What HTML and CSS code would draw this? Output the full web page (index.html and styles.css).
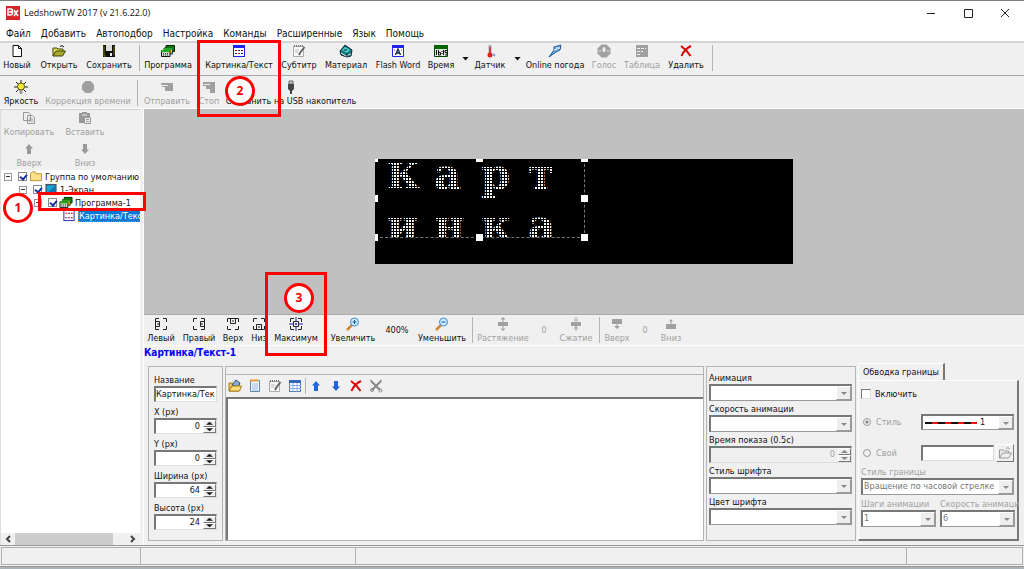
FILE: index.html
```html
<!DOCTYPE html>
<html lang="ru">
<head>
<meta charset="utf-8">
<title>LedshowTW 2017</title>
<link rel="stylesheet" href="styles.css">
</head>
<body>
<svg class="defs" aria-hidden="true">
  <symbol id="i-text" viewBox="0 0 14 14"><rect x="1.5" y="1.5" width="11" height="11" fill="#fff" stroke="#22e"/><path d="M1 1h12v3H1z" fill="#22e"/><path d="M3 6h2v1H3zM9 6h2v1H9zM6 9h2v1H6z" fill="#c00"/><path d="M6 6h2v1H6zM3 9h2v1H3zM9 9h2v1H9z" fill="#226"/></symbol>
  <symbol id="i-dots" viewBox="0 0 14 14"><rect x="1.5" y="1.5" width="11" height="11" fill="#fff" stroke="#22a"/><path d="M3 4h2v1H3zM9 4h2v1H9zM6 9h2v1H6z" fill="#c00"/><path d="M6 4h2v1H6zM3 9h2v1H3zM9 9h2v1H9z" fill="#226"/></symbol>
  <symbol id="i-prog" viewBox="0 0 14 14"><path d="M5 1.500h8.500v6H5z" fill="#080" stroke="#020"/><path d="M3 4h8.500v6H3z" fill="#fb0" stroke="#141"/><path d="M3 4h8.500v2H3z" fill="#2a2"/><path d="M.5 6.500h8.500v6H.5z" fill="#cdc" stroke="#111"/><path d="M0 7h9" stroke="#2a2" stroke-width="2"/><path d="M2 9.500h6M2 11h6" stroke="#333" stroke-dasharray="1 1"/></symbol>
  <symbol id="i-up" viewBox="0 0 14 14"><path d="M7 2l4 4.500H9V12H5V6.500H3z"/></symbol>
  <symbol id="i-down" viewBox="0 0 14 14"><path d="M7 12l4-4.500H9V2H5v5.500H3z"/></symbol>
  <symbol id="i-x" viewBox="0 0 14 14"><path d="M2 2c3 2 7 6 9.500 10M12 2C8 4 4 8 2.500 12" fill="none" stroke="#d00" stroke-width="2"/></symbol>
  <symbol id="i-open" viewBox="0 0 14 14"><path d="M1 12V4h4l1 1h5v2" fill="#dd5" stroke="#440"/><path d="M1 12l3-5h9.500l-3 5z" fill="#aa3" stroke="#440"/><path d="M8 2.500q2-2 4 .5" fill="none" stroke="#111"/></symbol>
  <symbol id="i-note" viewBox="0 0 14 14"><path d="M1.500 2.500h10v10h-10z" fill="#f8f8f8" stroke="#aaa"/><path d="M2 2h10" stroke="#777" stroke-width="2" stroke-dasharray="1 1"/><path d="M3 6h4M3 8h3" stroke="#bbb"/><path d="M12.500 3L8 9l-1 2" fill="none" stroke="#666" stroke-width="2"/></symbol>
</svg>

<div class="window">
  <header class="titlebar">
    <svg class="logo" viewBox="0 0 14 14"><rect width="14" height="14" fill="#d8232a"/><path d="M2 3h3q2 0 1 2 2 2-1 4H2zM3 6h3M8 4l4 6M12 4l-4 6" fill="none" stroke="#fff" stroke-width="1.500"/></svg>
    <h1>LedshowTW 2017 (v 21.6.22.0)</h1>
    <div class="caption">
      <button aria-label="Свернуть"><svg viewBox="0 0 10 10"><path d="M1 5.500h8" /></svg></button>
      <button aria-label="Развернуть"><svg viewBox="0 0 10 10"><path d="M1.500 1.500h8v8h-8z" /></svg></button>
      <button aria-label="Закрыть"><svg viewBox="0 0 10 10"><path d="M1 1l8 8M9 1L1 9" /></svg></button>
    </div>
  </header>
  <nav class="menu">
    <a href="#">Файл</a><a href="#">Добавить</a><a href="#">Автоподбор</a><a href="#">Настройка</a><a href="#">Команды</a><a href="#">Расширенные</a><a href="#">Язык</a><a href="#">Помощь</a>
  </nav>

  <div class="toolbar main-tools">
    <button class="tool w28"><svg viewBox="0 0 14 14"><path d="M3 1.500h5.500l3 3v8H3z" fill="#fff" stroke="#111"/><path d="M8.500 1.500v3h3" fill="none" stroke="#111"/></svg>Новый</button>
    <button class="tool w38"><svg><use href="#i-open"/></svg>Открыть</button>
    <button class="tool w44"><svg viewBox="0 0 14 14"><path d="M1 1h12v12H1z" fill="#111"/><path d="M4 1h6v6H4z" fill="#ddd"/><path d="M2 2v10h2M12 2v9" fill="none" stroke="#770"/><path d="M8 9h2v3H8z" fill="#eee"/></svg>Сохранить</button>
    <span class="sep"></span>
    <button class="tool w44"><svg><use href="#i-prog"/></svg>Программа</button>
    <button class="tool w68 lead"><svg><use href="#i-text"/></svg>Картинка/Текст</button>
    <button class="tool w34"><svg><use href="#i-note"/></svg>Субтитр</button>
    <button class="tool w42"><svg viewBox="0 0 14 14"><path d="M1 7l5-6 7 5-1 6-4 1-6-2z" fill="#157b80" stroke="#123"/><path d="M3 6l3-3 5 3-3 3z" fill="#4cc"/><path d="M2 9l5 3 5-2" stroke="#ddd" fill="none"/><path d="M5 6h3M8 9v3" stroke="#123"/></svg>Материал</button>
    <button class="tool w44"><svg viewBox="0 0 14 14"><path d="M1.500 2h11v10.500h-11z" fill="#fff" stroke="#22e"/><path d="M1 1h12v3H1z" fill="#22e"/><path d="M4.500 11l2.500-6 2.500 6M5 9h4" fill="none" stroke="#125" stroke-width="1.300"/><path d="M3 6h1M10 6h1" stroke="#c0c"/></svg>Flash Word</button>
    <button class="tool w24"><svg viewBox="0 0 14 14"><path d="M.5 1.500h13v11H.5z" fill="#dfe8df" stroke="#040"/><path d="M0 1h14v4H0z" fill="#060"/><path d="M2.500 6v5M4.500 6v5h2V8.500h-2M8 7v1M8 9v1M9.500 6v5M13 6.500h-2v2h2V11h-2" fill="none" stroke="#111"/></svg>Время</button>
    <button class="drop" aria-label="Меню времени"></button>
    <button class="tool w30"><svg viewBox="0 0 14 14"><path d="M7 1v9" stroke="#aab" stroke-width="3"/><path d="M7 3v8" stroke="#d22" stroke-width="1.500"/><circle cx="7" cy="11" r="2.500" fill="#d22"/><path d="M10 10l2 2" stroke="#6ad" stroke-width="2"/></svg>Датчик</button>
    <button class="drop" aria-label="Меню датчика"></button>
    <button class="tool w56"><svg viewBox="0 0 14 14"><path d="M1 13l5-7V3l7-2-1 5-4 2z" fill="#6ad" stroke="#259"/><path d="M6 6l3-1M8 4h4" stroke="#fff"/></svg>Online погода</button>
    <button class="tool w24" disabled><svg viewBox="0 0 14 14"><path d="M4.500.5h5l4 4v5l-4 4h-5l-4-4v-5z" fill="#a0a0a0"/><rect x="5.500" y="3" width="3" height="5" rx="1.500" fill="#eee"/><path d="M2 7h2M10 7h2" stroke="#eee"/></svg>Голос</button>
    <button class="tool w34" disabled><svg viewBox="0 0 14 14"><path d="M1 1h12v12H1z" fill="#a0a0a0"/><path d="M2 4.500h9M2 7.500h6M2 10.500h3" stroke="#eee" stroke-dasharray="3 1"/></svg>Таблица</button>
    <button class="tool w36"><svg><use href="#i-x"/></svg>Удалить</button>
    <span class="sep"></span>
  </div>

  <div class="toolbar send-tools">
    <button class="tool w34"><svg viewBox="0 0 14 14"><path d="M7 0v14M0 7h14M2 2l10 10M12 2L2 12" stroke="#222"/><circle cx="7" cy="6.500" r="3.500" fill="#fe3" stroke="#550"/><path d="M5.500 10h3v3h-3z" fill="#999"/></svg>Яркость</button>
    <button class="tool w82" disabled><svg viewBox="0 0 14 14"><path d="M4.500 1h5L13 4.500v5L9.500 13h-5L1 9.500v-5z" fill="#a0a0a0"/></svg>Коррекция времени</button>
    <span class="sep"></span>
    <button class="tool w46" disabled><svg viewBox="0 0 14 14"><path d="M1 3h12v8H5V7H2z" fill="#a0a0a0"/><path d="M1 5.500h7" stroke="#eee"/></svg>Отправить</button>
    <button class="tool w20" disabled><svg viewBox="0 0 14 14"><path d="M1 2h12v11H8V9H4V6H1z" fill="#a0a0a0"/><path d="M2 4.500h6" stroke="#eee"/></svg>Стоп</button>
    <button class="tool w126"><svg viewBox="0 0 14 14"><path d="M5 1h4v3H5z" fill="#ccc" stroke="#666"/><path d="M4 4h6v5l-2 2v3H6v-3L4 9z" fill="#444"/></svg>Сохранить на USB накопитель</button>
  </div>

  <div class="workspace">
    <aside class="sidebar">
      <div class="side-tools">
        <button class="tool" disabled><svg viewBox="0 0 14 14"><path d="M1.500 1.500h5l2 2v6h-7zM5.500 4.500h5l2 2v6h-7z" fill="#eee" stroke="#999"/><path d="M7 8h4M7 10h4" stroke="#999"/></svg>Копировать</button>
        <button class="tool" disabled><svg viewBox="0 0 14 14"><path d="M1 2h3V1h5v1h3v10H1z" fill="#999"/><path d="M4 4h5" stroke="#eee"/><path d="M6.500 6.500h6v6h-6z" fill="#eee" stroke="#999"/><path d="M8 8.500h3M8 10.500h3" stroke="#999"/></svg>Вставить</button>
        <button class="tool" disabled><svg fill="#999"><use href="#i-up"/></svg>Вверх</button>
        <button class="tool" disabled><svg fill="#999"><use href="#i-down"/></svg>Вниз</button>
      </div>
      <ul class="tree">
        <li><span class="exp"></span><input type="checkbox" checked id="n1"><svg viewBox="0 0 14 14"><path d="M1 11.500V4l2-2h3l1 2h6v7.500z" fill="#fbe08a" stroke="#b89030"/></svg><label for="n1">Группа по умолчанию1</label></li>
        <li class="l1"><span class="exp"></span><input type="checkbox" checked id="n2"><svg viewBox="0 0 14 14"><path d="M1 1h12v12H1z" fill="#456"/><path d="M2.500 2.500h9v9h-9z" fill="#18a8d8"/><path d="M3 11l8-8v8z" fill="#0878b8"/></svg><label for="n2">1-Экран</label></li>
        <li class="l2"><span class="exp"></span><input type="checkbox" checked id="n3"><svg><use href="#i-prog"/></svg><label for="n3">Программа-1</label></li>
        <li class="l3"><svg><use href="#i-dots"/></svg><a href="#" class="selected">Картинка/Текст-1</a></li>
      </ul>
      <div class="hscroll"><button aria-label="Влево"><svg viewBox="0 0 8 8"><path d="M6 1L3 4l3 3"/></svg></button><span class="thumb"></span><button aria-label="Вправо"><svg viewBox="0 0 8 8"><path d="M2 1l3 3-3 3"/></svg></button></div>
    </aside>

    <main class="editor">
      <section class="stage">
        <div class="screen">
          <div class="area">
            <div class="led"><span>К</span><span>а</span><span>р</span><span>т</span><span>и</span><span>н</span><span>к</span><span>а</span></div>
            <i class="h left top"></i><i class="h mid top"></i><i class="h right top"></i>
            <i class="h left center"></i><i class="h right center"></i>
            <i class="h left bottom"></i><i class="h mid bottom"></i><i class="h right bottom"></i>
          </div>
        </div>
      </section>

      <div class="toolbar align-tools">
        <button class="tool w28"><svg viewBox="0 0 14 14"><path d="M5 1.500H1.500v11H5M9 1.500h3.500V5M12.500 9v3.500H9M1.500 4.500h4v5h-4M3 7h3" /></svg>Левый</button>
        <button class="tool w32"><svg viewBox="0 0 14 14"><path d="M9 1.500h3.500v11H9M5 1.500H1.500V5M1.500 9v3.500H5M12.500 4.500h-4v5h4M8 7h3" /></svg>Правый</button>
        <button class="tool w20"><svg viewBox="0 0 14 14"><path d="M1.500 5V1.500h11V5M1.500 9v3.500H5M9 12.500h3.500V9M4.500 1.500v5h5v-5M7 3v2" /></svg>Верх</button>
        <button class="tool w16"><svg viewBox="0 0 14 14"><path d="M1.500 9v3.500h11V9M1.500 5V1.500H5M9 1.500h3.500V5M4.500 12.500v-5h5v5M7 9v2" /></svg>Низ</button>
        <button class="tool w42"><svg viewBox="0 0 14 14"><path d="M5 1.500H1.500V5M9 1.500h3.500V5M1.500 9v3.500H5M9 12.500h3.500V9M4.500 4.500h5v5h-5z" /><path d="M7 0v14M0 7h14" stroke="#22a" stroke-dasharray="5 1 2 1"/></svg>Максимум</button>
        <button class="tool w44 lead"><svg viewBox="0 0 14 14"><path d="M6 8l-5 5" stroke="#c83" stroke-width="2.500"/><circle cx="8.500" cy="5" r="4" fill="#cef" stroke="#48c"/><path d="M8.500 3v4M6.500 5h4" stroke="#15a"/></svg>Увеличить</button>
        <output class="w28">400%</output>
        <button class="tool w46"><svg viewBox="0 0 14 14"><path d="M6 8l-5 5" stroke="#c83" stroke-width="2.500"/><circle cx="8.500" cy="5" r="4" fill="#cef" stroke="#48c"/><path d="M6.500 5h4" stroke="#15a"/></svg>Уменьшить</button>
        <span class="sep"></span>
        <button class="tool w50" disabled><svg viewBox="0 0 14 14"><path d="M2 5h10v4H2zM7 0l2.500 2.500h-5zM7 14l2.500-2.500h-5zM6.500 2h1v10h-1z" /></svg>Растяжение</button>
        <output class="w16 off">0</output>
        <button class="tool w32" disabled><svg viewBox="0 0 14 14"><path d="M2 5h10v4H2zM7 5l2.500-2.500h-5zM7 9l2.500 2.500h-5zM6.500 0h1v14h-1z" /></svg>Сжатие</button>
        <span class="sep"></span>
        <button class="tool w24" disabled><svg viewBox="0 0 14 14"><path d="M2 2h10v5H2zM6.500 7h1v2H10l-3 3-3-3h2.500z" /></svg>Вверх</button>
        <output class="w16 off">0</output>
        <button class="tool w20" disabled><svg viewBox="0 0 14 14"><path d="M2 7h10v5H2zM7 2l2 2.500H7.500V7h-1V4.500H5z" /></svg>Вниз</button>
      </div>
      <h2>Картинка/Текст-1</h2>

      <div class="panels">
        <form class="panel position">
          <div class="field"><label for="name">Название</label><div class="box"><input id="name" value="Картинка/Тек"></div></div>
          <div class="field"><label for="px">X (px)</label><div class="box num"><input id="px" value="0"><span class="spin"><button type="button" aria-label="Больше"></button><button type="button" aria-label="Меньше"></button></span></div></div>
          <div class="field"><label for="py">Y (px)</label><div class="box num"><input id="py" value="0"><span class="spin"><button type="button" aria-label="Больше"></button><button type="button" aria-label="Меньше"></button></span></div></div>
          <div class="field"><label for="pw">Ширина (px)</label><div class="box num"><input id="pw" value="64"><span class="spin"><button type="button" aria-label="Больше"></button><button type="button" aria-label="Меньше"></button></span></div></div>
          <div class="field"><label for="ph">Высота (px)</label><div class="box num"><input id="ph" value="24"><span class="spin"><button type="button" aria-label="Больше"></button><button type="button" aria-label="Меньше"></button></span></div></div>
        </form>

        <section class="panel content">
          <div class="content-tools">
            <button aria-label="Открыть"><svg viewBox="0 0 14 14"><path d="M1 12V4h4l1 1h5v7z" fill="#f5c95a" stroke="#a67a1a"/><path d="M4 6l4-5 4 3-2 4z" fill="#8ac" stroke="#357"/><path d="M1 12l3-5h9.500l-2 5z" fill="#fd7" stroke="#a67a1a"/></svg></button>
            <button aria-label="Текст"><svg viewBox="0 0 14 14"><path d="M2.500 1.500h9v11h-9z" fill="#eef4ff" stroke="#58a"/><path d="M2 1.500h8" stroke="#e93" stroke-width="2"/><path d="M4 5h6M4 7h6M4 9h6M4 11h6" stroke="#9bd"/></svg></button>
            <button aria-label="Правка"><svg><use href="#i-note"/></svg></button>
            <button aria-label="Таблица"><svg viewBox="0 0 14 14"><path d="M1.500 1.500h11v11h-11z" fill="#fff" stroke="#47b"/><path d="M1 2.500h12" stroke="#36b" stroke-width="3"/><path d="M1 6.500h12M1 9.500h12M5 4v9M9 4v9" stroke="#8ae"/></svg></button>
            <span class="sep"></span>
            <button aria-label="Вверх"><svg fill="#26d"><use href="#i-up"/></svg></button>
            <button aria-label="Вниз"><svg fill="#26d"><use href="#i-down"/></svg></button>
            <button aria-label="Удалить"><svg><use href="#i-x"/></svg></button>
            <button aria-label="Очистить"><svg viewBox="0 0 14 14" fill="none" stroke="#888"><path d="M2 2l9 9M12 2l-9 9" stroke-width="2"/><circle cx="3" cy="11" r="1.500"/><circle cx="11.500" cy="11.500" r="1.500"/><path d="M1 1l2 1M11 1l2 1"/></svg></button>
          </div>
          <div class="list"></div>
        </section>

        <form class="panel anim">
          <div class="field"><label for="an">Анимация</label><div class="box select"><select id="an"><option></option></select></div></div>
          <div class="field"><label for="sp">Скорость анимации</label><div class="box select"><select id="sp"><option></option></select></div></div>
          <div class="field"><label for="tm">Время показа (0.5с)</label><div class="box num off"><input id="tm" value="0" disabled><span class="spin"><button type="button" disabled aria-label="Больше"></button><button type="button" disabled aria-label="Меньше"></button></span></div></div>
          <div class="field"><label for="fs">Стиль шрифта</label><div class="box select"><select id="fs"><option></option></select></div></div>
          <div class="field"><label for="fc">Цвет шрифта</label><div class="box select"><select id="fc"><option></option></select></div></div>
        </form>

        <form class="border">
          <button type="button" class="tab">Обводка границы</button>
          <div class="tab-body">
            <div class="row"><input type="checkbox" id="on" class="sunk"><label for="on">Включить</label></div>
            <div class="row cols off first"><span class="opt"><input type="radio" name="st" id="s1" checked disabled><label for="s1">Стиль</label></span>
              <div class="box select line"><svg class="dash" viewBox="0 0 52 2" preserveAspectRatio="none"><path d="M0 1h52" stroke="#e11" stroke-width="2"/><path d="M0 1h52" stroke="#111" stroke-width="2" stroke-dasharray="7 6"/></svg><select aria-label="Линия"><option>1</option></select></div></div>
            <div class="row cols off"><span class="opt"><input type="radio" name="st" id="s2" disabled><label for="s2">Свой</label></span>
              <div class="file"><div class="box"><input aria-label="Файл"></div><button type="button" class="browse" disabled aria-label="Обзор"><svg viewBox="0 0 14 14" fill="none" stroke="#999"><path d="M1.500 12V4h4l1 1h4v2M1.500 12l3-5h9l-3 5zM8 2.500q2-2 4 .5"/></svg></button></div></div>
            <div class="field off"><label for="bs">Стиль границы</label><div class="box select"><select id="bs" disabled><option>Вращение по часовой стрелке</option></select></div></div>
            <div class="pair off">
              <div class="field"><label for="b1">Шаги анимации</label><div class="box select"><select id="b1" disabled><option>1</option></select></div></div>
              <div class="field"><label for="b2">Скорость анимаци</label><div class="box select"><select id="b2" disabled><option>6</option></select></div></div>
            </div>
          </div>
        </form>
      </div>
    </main>
  </div>

  <footer class="status"><span></span><span></span><span></span><span></span></footer>

  <div class="frame f1"></div><div class="frame f2"></div><div class="frame f3"></div>
  <div class="mark m1">1</div><div class="mark m2">2</div><div class="mark m3">3</div>
</div>
</body>
</html>
```
FILE: styles.css
```css
* { box-sizing: border-box; }
body { margin: 0; font: 9px/12px "DejaVu Sans Condensed", "DejaVu Sans", sans-serif; color: #111; background: #f0f0f0; }
button, input, select { font: inherit; color: inherit; margin: 0; padding: 0; border: 0; background: none; border-radius: 0; }
svg { display: block; width: 14px; height: 14px; flex: none; }
.defs { position: absolute; width: 0; height: 0; }
.window { position: relative; display: flex; flex-direction: column; min-height: 100vh; overflow: hidden; border-top: 1px solid #808080; border-bottom: 2px solid #a9b3b5; }

.titlebar { display: flex; align-items: center; gap: 4px; height: 24px; padding-left: 6px; background: #fff; }
.titlebar h1 { flex: 1; margin: 0; font: 9px/14px "Open Sans", sans-serif; }
.caption { display: flex; gap: 27px; padding-right: 14px; }
.caption svg { width: 10px; height: 10px; fill: none; stroke: #222; }
.menu { display: flex; gap: 10px; height: 18px; padding: 2px 6px 0; background: #fff; border-bottom: 2px solid #d4d4d4; }
.menu a { color: #111; text-decoration: none; font-size: 10px; line-height: 14px; }

.toolbar { display: flex; align-items: center; gap: 9px; height: 33px; padding: 0 4px; border-bottom: 1px solid #fff; }
.main-tools { padding: 0 3px 3px; border-bottom: 1px solid #a8a8a8; }
.send-tools { padding-top: 2px; }
.tool { display: flex; flex-direction: column; align-items: center; white-space: nowrap; line-height: 12px; flex: none; }
.tool svg { width: 14px; height: 14px; margin-bottom: 1px; }
.tool:disabled, .off { color: #a0a0a0; }
.sep { width: 1px; height: 26px; background: #b4b4b4; flex: none; margin: 0 -3px 0 -1px; }
.lead { margin-left: 6px; }
.drop { flex: none; width: 7px; height: 4px; background: #111; clip-path: polygon(0 0, 100% 0, 50% 100%); margin: 2px -3px 0 0; }
.w16 { width: 16px; } .w20 { width: 20px; } .w24 { width: 24px; } .w28 { width: 28px; } .w30 { width: 30px; } .w32 { width: 32px; } .w34 { width: 34px; }
.w36 { width: 36px; } .w38 { width: 38px; } .w42 { width: 42px; } .w44 { width: 44px; }
.w46 { width: 46px; } .w50 { width: 50px; } .w56 { width: 56px; } .w68 { width: 68px; } .w82 { width: 82px; } .w126 { width: 126px; }

.workspace { flex: 1; display: flex; min-height: 0; border-bottom: 1px solid #999; }
.sidebar { width: 140px; flex: none; display: flex; flex-direction: column; background: #fff; border-left: 1px solid #ddd; border-top: 1px solid #ccc; }
.side-tools { display: grid; grid-template-columns: 56px 56px; gap: 3px 0; height: 60px; padding-top: 1px; background: #f0f0f0; }
.tree { flex: 1; list-style: none; margin: 0; padding: 0 0 0 3px; overflow: hidden; }
.tree li { display: flex; align-items: center; height: 13px; white-space: nowrap; }
.tree svg { width: 14px; height: 13px; margin: 0 2px; }
.tree .l1 { padding-left: 15px; }
.tree .l2 { padding-left: 30px; }
.tree .l3 { padding-left: 56px; }
.exp { width: 8px; height: 8px; margin-right: 6px; flex: none; border: 1px solid #999; background: linear-gradient(#333, #333) center / 4px 1px no-repeat; }
.tree input { appearance: none; width: 9px; height: 9px; flex: none; border: 1px solid #888; background: #fff; position: relative; }
.tree input:checked::after { content: ""; position: absolute; left: 2px; top: 0; width: 3px; height: 5px; border: solid #1a2fa0; border-width: 0 2px 2px 0; transform: rotate(40deg); }
.selected { background: #0878d7; color: #fff; text-decoration: none; outline: 1px dotted #c84; outline-offset: -1px; padding: 0 1px; }
.hscroll { display: flex; align-items: center; height: 12px; background: #f0f0f0; }
.hscroll button { width: 14px; display: grid; place-items: center; }
.hscroll svg { width: 8px; height: 8px; fill: none; stroke: #444; stroke-width: 2; }
.thumb { width: 98px; height: 12px; background: #cdcdcd; margin-right: auto; }

.editor { flex: 1; min-width: 0; display: flex; flex-direction: column; margin-left: 3px; border-left: 1px solid #fff; }
.stage { flex: 1; display: grid; place-items: center; background: #c0c0c0; border-bottom: 1px solid #aaa; }
.screen { width: 418px; height: 105px; background: #000; overflow: hidden; }
.area { position: relative; width: 210px; height: 79px; border: dashed #777; border-width: 0 1px 1px 0; }
.led { position: absolute; inset: 0; overflow: hidden; display: grid; grid-template-columns: repeat(4, 47px); grid-auto-rows: 51px; padding-left: 12px; color: #fff; font: bold 42px/32px "DejaVu Serif", serif; }
.led span:first-child { font-size: 36px; }
.led::after { content: ""; position: absolute; inset: 0; background: repeating-linear-gradient(90deg, #000 0 1px, transparent 1px 3px), repeating-linear-gradient(#000 0 1px, transparent 1px 3px); }
.h { position: absolute; width: 7px; height: 7px; background: #fff; }
.left { left: -4px; } .mid { left: 101px; } .right { right: -4px; }
.top { top: -4px; } .center { top: 36px; } .bottom { bottom: -4px; }

.align-tools { height: 31px; padding: 0 3px; gap: 8px; }
.align-tools svg { fill: none; stroke: #222; }
.align-tools .tool:disabled svg { fill: #a0a0a0; stroke: none; }
.align-tools output { text-align: center; }
h2 { margin: 0; height: 20px; color: #00f; font-size: 10px; line-height: 14px; }

.panels { display: flex; gap: 2px; height: 175px; margin: 0 5px 4px 4px; }
.panel { border: 1px solid #b4b4b4; }
.position { width: 75px; padding: 7px 5px 0; display: flex; flex-direction: column; gap: 4px; }
.field { display: flex; flex-direction: column; min-width: 0; }
.field label { white-space: nowrap; }
.box { position: relative; display: flex; height: 16px; min-width: 0; background: #fff; border: 1px solid; border-width: 2px 1px 1px 2px; border-color: #777 #ddd #ddd #777; }
.box input, .box select { appearance: none; flex: 1; width: 0; min-width: 0; height: 13px; line-height: 13px; }
.num input { text-align: right; padding-right: 3px; }
.num.off { background: #f0f0f0; }
.spin { display: flex; flex-direction: column; width: 13px; }
.spin button { flex: 1; background: #eee; border: 1px solid; border-color: #fff #777 #777 #fff; display: grid; place-items: center; }
.spin button::before { content: ""; width: 7px; height: 3px; background: #111; clip-path: polygon(50% 0, 100% 100%, 0 100%); }
.spin button + button::before { clip-path: polygon(0 0, 100% 0, 50% 100%); }
.spin button:disabled::before { background: #888; }
.select { border-width: 2px 1px 1px 2px; border-color: #777 #999 #999 #777; }
.select select { padding-left: 1px; opacity: 1; color: #777; }
.select::before { content: ""; position: absolute; right: 0; top: 0; bottom: 0; width: 13px; background: #eee; border: 1px solid; border-color: #fff #999 #999 #fff; pointer-events: none; }
.select::after { content: ""; position: absolute; right: 4px; top: 6px; width: 6px; height: 3px; background: #888; clip-path: polygon(0 0, 100% 0, 50% 100%); pointer-events: none; }

.content { flex: 1; display: flex; flex-direction: column; min-width: 0; padding-top: 7px; }
.content-tools { display: flex; align-items: center; gap: 6px; height: 23px; padding-left: 2px; border-top: 1px solid #b4b4b4; }
.content-tools .sep { height: 16px; margin: 0 -3px; }
.content-tools svg { width: 14px; height: 14px; }
.list { flex: 1; background: #fff; border: solid #777; border-width: 2px 0 0 2px; }
.anim { width: 150px; padding: 5px 3px 0 2px; display: flex; flex-direction: column; gap: 2px; }
.anim .box { height: 17px; }

.border { width: 161px; display: flex; flex-direction: column; align-items: stretch; margin-top: -3px; }
.tab { align-self: flex-start; height: 17px; padding: 0 4px; border: 1px solid; border-width: 1px 2px 0 1px; border-color: #fff #777 #fff #fff; white-space: nowrap; }
.tab-body { flex: 1; display: flex; flex-direction: column; padding: 4px 3px 0 2px; border: 1px solid; border-width: 1px 2px 2px 1px; border-color: #fff #777 #777 #fff; }
.row { display: flex; align-items: center; gap: 4px; height: 18px; }
.cols { display: grid; grid-template-columns: 56px 1fr; margin-top: 13px; }
.first { margin-top: 10px; }
.sunk { appearance: none; width: 10px; height: 10px; background: #fff; border: 1px solid; border-color: #777 #ddd #ddd #777; }
.opt { display: flex; align-items: center; gap: 5px; padding-left: 2px; }
.opt input { appearance: none; width: 8px; height: 8px; border: 1px solid #999; border-radius: 50%; }
.opt input:checked { background: radial-gradient(#888 0 1px, transparent 2px); }
.line { align-items: center; }
.line select { color: #111; padding-left: 3px; }
.dash { width: 52px; height: 2px; margin-left: 2px; }
.file { display: flex; gap: 2px; align-items: center; }
.file .box { flex: 1; }
.browse { width: 18px; height: 18px; display: grid; place-items: center; border: 1px solid; border-color: #fff #777 #777 #fff; }
.tab-body > .field { margin-top: 4px; }
.pair { display: grid; grid-template-columns: 75px 75px; gap: 4px; margin-top: 3px; }
.tab-body .field .box { height: 17px; }

.status { display: grid; grid-template-columns: 140px 215px 1fr 116px; height: 21px; padding: 1px; border-bottom: 1px solid #999; }
.status span { border: 1px solid #b0b0b0; border-left-width: 0; }
.status span:first-child { border-left-width: 1px; }

.frame { position: absolute; border: 3px solid #f00; pointer-events: none; }
.f1 { left: 38px; top: 191px; width: 108px; height: 19px; }
.f2 { left: 197px; top: 39px; width: 84px; height: 77px; }
.f3 { left: 265px; top: 271px; width: 62px; height: 84px; }
.mark { position: absolute; width: 30px; height: 30px; border: 3px solid #f00; border-radius: 50%; background: #fff; color: #e00; font: bold 12px/24px "Open Sans", sans-serif; text-align: center; }
.m1 { left: 3px; top: 192px; }
.m2 { left: 225px; top: 75px; }
.m3 { left: 284px; top: 282px; }
```
